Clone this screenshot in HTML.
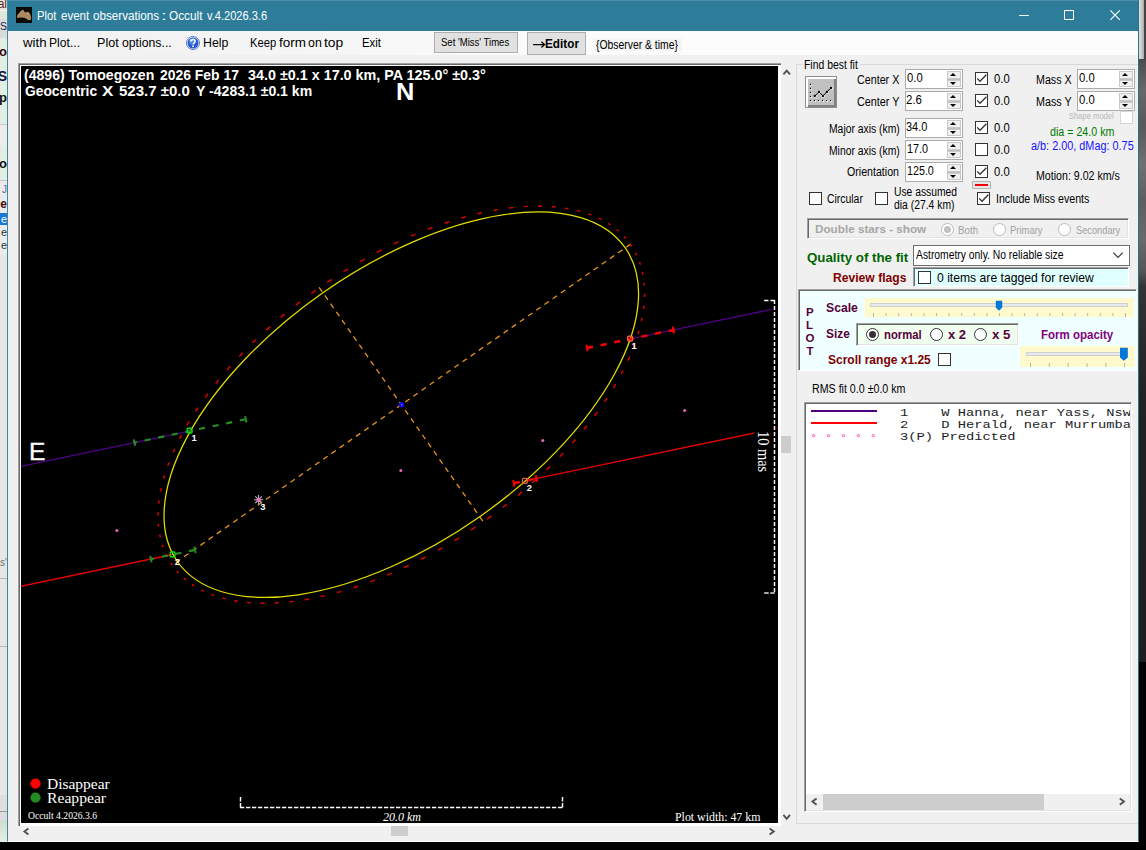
<!DOCTYPE html>
<html lang="en"><head><meta charset="utf-8"><title>Plot event observations : Occult v.4.2026.3.6</title>
<style>
html,body{margin:0;padding:0;font-family:"Liberation Sans",sans-serif}
body{width:1146px;height:850px;overflow:hidden;background:#000;position:relative;font-family:"Liberation Sans",sans-serif;font-size:11px;color:#000}
div,span,svg{position:absolute;box-sizing:border-box}
.t{white-space:pre;transform-origin:0 50%;display:block}
.win{left:7px;top:0;width:1132px;height:842px;background:#f0f0f0;border-left:1px solid #3d88a8;border-right:1px solid #2a6f8c;border-bottom:1px solid #fff}
.title{left:8px;top:0;width:1130px;height:31px;background:#2d7d9a;border-top:1px solid #4a8ea9}
.menu{left:8px;top:31px;width:1130px;height:24px;background:linear-gradient(90deg,#f1f1f1 0,#f5f5f5 300px,#fbfbfb 520px,#fcfcfc 700px)}
.btn{background:#e1e1e1;border:1px solid #adadad}
.sunk{border-style:solid;border-width:1px;border-color:#a0a0a0 #fff #fff #a0a0a0}
.nud{width:58px;height:20px;background:#fff;border:1px solid #ababab}
.nud i{position:absolute;box-sizing:border-box;left:41px;width:13.6px;height:8.2px;background:#f0f0f0;border:1px solid #c9c9c9}
.nud i.u{top:.9px;box-shadow:0 1.3px 0 #bfbfbf}.nud i.d{top:10px;height:7.2px}
.nud i:after{content:"";position:absolute;left:2.3px;border:3.5px solid transparent}
.nud i.u:after{border-bottom:3.5px solid #000;border-top:0;top:1.2px}
.nud i.d:after{top:1px;border-top:3.5px solid #000;border-bottom:0}
.cb{width:13px;height:13px;background:#fff;border:1px solid #333}
.rb{width:13px;height:13px;border-radius:50%;background:#fff;border:1px solid #333}
.rb.dis{border-color:#bcbcbc}
.thumb{background:#cdcdcd}
.sb{-webkit-text-stroke:.35px currentColor}
.serif{font-family:"Liberation Serif",serif}
.mono{font-family:"Liberation Mono",monospace}
</style></head><body>
<!-- neighbouring window strip (left) and desktop (right) -->
<div style="left:0;top:0;width:7px;height:842px;background:#e6e6e6;overflow:hidden"><div style="left:0;top:0px;width:7px;height:10px;background:#e8e4e2"></div><div style="left:0;top:10px;width:7px;height:1px;background:#f6faf2"></div><div style="left:0;top:11px;width:7px;height:8px;background:#dfe9db"></div><div style="left:0;top:19px;width:7px;height:19px;background:#dadada"></div><div style="left:0;top:38px;width:7px;height:86px;background:#e3eee3"></div><div style="left:0;top:124px;width:7px;height:1px;background:#c8c8c8"></div><div style="left:0;top:125px;width:7px;height:21px;background:#ececec"></div><div style="left:0;top:146px;width:7px;height:34px;background:#e3eee3"></div><div style="left:0;top:180px;width:7px;height:1px;background:#c4c4c4"></div><div style="left:0;top:181px;width:7px;height:32px;background:#eaeaea"></div><div style="left:0;top:213px;width:7px;height:12px;background:#1979d4"></div><div style="left:0;top:225px;width:7px;height:30px;background:#ececec"></div><div style="left:0;top:578px;width:7px;height:1px;background:#b8b8b8"></div><div style="left:0;top:646px;width:7px;height:1px;background:#b8b8b8"></div><div style="left:0;top:795px;width:7px;height:16px;background:#dedede"></div><div style="left:0;top:811px;width:7px;height:1px;background:#9a9a9a"></div><div style="left:0;top:812px;width:7px;height:8px;background:#dcdcdc"></div><div style="left:0;top:820px;width:7px;height:22px;background:linear-gradient(#cfdccd,#e6efe3)"></div><span style="right:0;top:-1.7px;font-size:12px;line-height:12px;font-weight:400;color:#5a2a1a;white-space:pre">al</span><span style="right:0;top:21.1px;font-size:10.5px;line-height:10.5px;font-weight:400;color:#1a1a4a;white-space:pre">S</span><span style="right:0;top:45.0px;font-size:13px;line-height:13px;font-weight:700;color:#3a0808;white-space:pre">to</span><span style="right:0;top:68.6px;font-size:14px;line-height:14px;font-weight:700;color:#10103a;white-space:pre">S</span><span style="right:0;top:91.0px;font-size:13px;line-height:13px;font-weight:700;color:#101010;white-space:pre">sp</span><span style="right:0;top:157.4px;font-size:13px;line-height:13px;font-weight:700;color:#101010;white-space:pre">o</span><span style="right:0;top:184.5px;font-size:10px;line-height:10px;font-weight:400;color:#5a6a9a;white-space:pre">J</span><span style="right:0;top:197.8px;font-size:12px;line-height:12px;font-weight:700;color:#4a0a0a;white-space:pre">le</span><span style="right:0;top:213.7px;font-size:11px;line-height:11px;font-weight:400;color:#ffffff;white-space:pre">e</span><span style="right:0;top:226.7px;font-size:11px;line-height:11px;font-weight:400;color:#303030;white-space:pre">e</span><span style="right:0;top:239.7px;font-size:11px;line-height:11px;font-weight:400;color:#303030;white-space:pre">e</span><span style="right:0;top:557.5px;font-size:10px;line-height:10px;font-weight:400;color:#707070;white-space:pre">s'</span></div>
<div style="left:1139px;top:0;width:7px;height:662px;background:linear-gradient(#444 0,#444 59px,#505050 62px,#686868 90px,#585858 125px,#707070 165px,#5e5e5e 200px,#6a6a6a 240px,#555 272px,#343434 286px,#2c2c2c 330px,#222 400px,#1e1e1e 660px)"></div>
<div style="left:1139.4px;top:0;width:4.8px;height:59px;background:linear-gradient(90deg,#e2e2e2,#c4c4c4 60%,#a8a8a8)"></div>
<div class="win"></div>
<div class="title"></div>
<svg style="left:16px;top:7px" width="16" height="16" viewBox="0 0 16 16"><rect width="16" height="16" fill="#0c0a07"/><path d="M.9 9.3C1.4 8 2 7.2 2.8 6.5C3.5 5.5 4.2 4.7 5 4C5.6 3.4 6.2 3 6.8 2.9C7.3 2.9 7.7 3 7.9 3.4C8.2 4 8.3 4.7 8.7 5.1C9.1 5.4 9.5 5.5 9.9 5.4C10.5 5 11 4.8 11.6 4.8C12.3 4.9 12.9 5.3 13.4 5.9C13.9 6.5 14.2 7.3 14.4 8.1C14.8 9 15 10 15.1 10.9C15.1 11.8 14.8 12.5 14.3 12.9C13.7 13.2 13 13.2 12.4 13C11.8 12.8 11.2 12.5 10.7 12.1C10.1 11.6 9.6 11.1 9 10.9C8.4 10.7 7.7 10.7 7.1 10.7C6.2 10.6 5.2 10.6 4.3 10.6C3.6 10.7 2.9 10.9 2.2 10.9C1.7 10.8 1.3 10.6 1.1 10.2C.9 9.9 .8 9.6 .9 9.3Z" fill="#a98a5e"/><path d="M2.6 8.2C3.6 6.6 4.8 5.2 6.4 4.2M10.4 6.6C11.4 6.2 12.4 6.6 13.2 7.6" fill="none" stroke="#b99a6c" stroke-width="1.2" stroke-linecap="round" opacity=".7"/></svg>
<svg style="left:1010px;top:0" width="128" height="31" viewBox="1010 0 128 31" fill="none" stroke="#fff" stroke-width="1"><path d="M1019 15.5H1029"/><rect x="1064.5" y="10.5" width="9" height="9"/><path d="M1110.3 10.3L1119.8 19.8M1119.8 10.3L1110.3 19.8" stroke-width="1.15"/></svg>
<div class="menu"></div>
<svg style="left:186px;top:36px" width="14" height="14" viewBox="0 0 14 14"><circle cx="7" cy="7" r="6.5" fill="#fff" stroke="#4468c8" stroke-width=".9"/><circle cx="7" cy="7" r="5.5" fill="#2256cc"/><circle cx="6.2" cy="5.6" r="3.6" fill="#5f98ee" opacity=".55"/><circle cx="5.8" cy="4.8" r="2" fill="#7fb0f6" opacity=".5"/><path d="M4.9 5.6C4.9 4.2 5.8 3.5 7.1 3.5C8.4 3.5 9.2 4.3 9.2 5.3C9.2 6.8 7.3 6.9 7.2 8.4" fill="none" stroke="#fff" stroke-width="1.5"/><circle cx="7.1" cy="10.3" r=".95" fill="#fff"/></svg>
<div class="btn" style="left:434px;top:32px;width:84px;height:21px"></div>
<div class="btn" style="left:527px;top:32px;width:59px;height:23px"></div>
<svg style="left:531px;top:40px" width="16" height="10" viewBox="531 40 16 10"><path d="M533.1 44.6H544.4M541.4 41.8L544.6 44.6L541.4 47.4" fill="none" stroke="#000" stroke-width="1.3"/></svg>
<div style="left:593px;top:38px;width:89px;height:13px;background:#f5f5f5"></div>
<!-- plot picture box with scrollbars -->
<div style="left:18px;top:63px;width:763px;height:763px;background:#fff;border-top:1px solid #a0a0a0;border-left:1px solid #a0a0a0"></div>
<div style="left:19px;top:64px;width:762px;height:762px;background:#fff;border-top:1px solid #696969;border-left:1px solid #696969"></div>
<div style="left:21px;top:66px;width:757px;height:757px;background:#000"></div>
<svg style="left:21px;top:66px" width="757" height="757" viewBox="21 66 757 757" fill="none"><g stroke="#ea9614" stroke-width="1.28" stroke-dasharray="5.3 4.7"><path d="M630.7 244.1L171.9 565.3"/><path d="M319.1 287.3L483.5 522.1"/></g><path d="M20.5 466.4L189.6 431.1M630 339.0L771.6 309.4M777 308.3L778 308.1" stroke="#4e0388" stroke-width="1.25"/><path d="M20.5 586.3L172.6 554.5M524.9 480.9L778 428.0" stroke="#e40000" stroke-width="1.4"/><ellipse cx="401.3" cy="404.7" rx="273.4" ry="136.7" transform="rotate(-35 401.3 404.7)" stroke="#e2de00" stroke-width="1.25"/><path d="M630.3 244.2L631.8 246.5M635.4 252.8L636.7 255.3M639.5 262.1L640.4 264.7M642.3 272.0L642.9 274.9M644.0 282.7L644.3 285.7M644.6 293.9L644.5 297.1M643.9 305.7L643.5 309.0M642.0 317.9L641.3 321.3M639.0 330.6L638.0 334.1M634.8 343.6L633.5 347.2M629.5 356.9L627.9 360.6M623.1 370.5L621.1 374.2M615.6 384.2L613.3 388.0M607.0 398.0L604.5 401.8M597.5 411.9L594.7 415.7M586.9 425.7L583.9 429.5M575.5 439.4L572.2 443.2M563.3 453.0L559.7 456.7M550.2 466.3L546.5 469.9M536.4 479.3L532.5 482.8M522.0 492.0L517.9 495.4M506.9 504.2L502.7 507.5M491.4 515.9L487.1 519.1M475.4 527.1L471.0 530.1M459.1 537.8L454.5 540.6M442.5 547.7L437.8 550.3M425.6 557.0L421.0 559.4M408.7 565.5L404.0 567.7M391.7 573.2L387.0 575.2M374.8 580.1L370.1 581.9M358.0 586.2L353.4 587.7M341.4 591.4L336.9 592.6M325.1 595.6L320.7 596.6M309.2 599.0L304.8 599.7M293.7 601.4L289.5 601.8M278.7 602.8L274.7 603.0M264.4 603.2L260.5 603.2M250.7 602.7L247.0 602.4M237.7 601.3L234.3 600.7M225.6 598.9L222.4 598.0M214.2 595.5L211.3 594.4M203.9 591.2L201.2 589.8M194.4 586.0L192.0 584.4M186.0 579.9L183.9 578.1M178.6 572.9L176.8 570.9M172.3 565.2L170.8 562.9M167.2 556.6L165.9 554.1M163.1 547.3L162.2 544.7M160.3 537.4L159.7 534.5M158.6 526.7L158.3 523.7M158.0 515.5L158.1 512.3M158.7 503.7L159.1 500.4M160.6 491.5L161.3 488.1M163.6 478.8L164.6 475.3M167.8 465.8L169.1 462.2M173.1 452.5L174.7 448.8M179.5 438.9L181.5 435.2M187.0 425.2L189.3 421.4M195.6 411.4L198.1 407.6M205.1 397.5L207.9 393.7M215.7 383.7L218.7 379.9M227.1 370.0L230.4 366.2M239.3 356.4L242.9 352.7M252.4 343.1L256.1 339.5M266.2 330.1L270.1 326.6M280.6 317.4L284.7 314.0M295.7 305.2L299.9 301.9M311.2 293.5L315.5 290.3M327.2 282.3L331.6 279.3M343.5 271.6L348.1 268.8M360.1 261.7L364.8 259.1M377.0 252.4L381.6 250.0M393.9 243.9L398.6 241.7M410.9 236.2L415.6 234.2M427.8 229.3L432.5 227.5M444.6 223.2L449.2 221.7M461.2 218.0L465.7 216.8M477.5 213.8L481.9 212.8M493.4 210.4L497.8 209.7M508.9 208.0L513.1 207.6M523.9 206.6L527.9 206.4M538.2 206.2L542.1 206.2M551.9 206.7L555.6 207.0M564.9 208.1L568.3 208.7M577.0 210.5L580.2 211.4M588.4 213.9L591.3 215.0M598.7 218.2L601.4 219.6M608.2 223.4L610.6 225.0M616.6 229.5L618.7 231.3M624.0 236.5L625.8 238.5" stroke="#de0000" stroke-width="1.45"/><path d="M245.8 419.3L134.4 442.6" stroke="#239023" stroke-width="2.1" stroke-dasharray="6.1 7.8"/><path d="M133.7 439.4L135.1 445.8M245.1 416.1L246.5 422.5" stroke="#239023" stroke-width="2"/><path d="M587.0 348.0L674.6 329.7" stroke="#ff0000" stroke-width="2.5" stroke-dasharray="6.1 7.8"/><path d="M586.3 344.8L587.7 351.2M672.7 326.7L674.1 333.2" stroke="#ff0000" stroke-width="2"/><path d="M195.0 549.9L150.9 559.1" stroke="#239023" stroke-width="2.1" stroke-dasharray="6.1 7.8"/><path d="M150.2 555.9L151.6 562.3M194.3 546.6L195.7 553.1" stroke="#239023" stroke-width="2"/><path d="M513.8 483.2L537.7 478.2" stroke="#ff0000" stroke-width="2.5" stroke-dasharray="6.1 7.8"/><path d="M513.1 480.0L514.5 486.5M535.8 475.3L537.2 481.7" stroke="#ff0000" stroke-width="2"/><rect x="187.2" y="428.2" width="4.8" height="4.8" rx=".9" stroke="#10dc10" stroke-width="1.4"/><rect x="170.2" y="552.0" width="4.8" height="4.8" rx=".9" stroke="#10dc10" stroke-width="1.4"/><rect x="627.7" y="336.2" width="4.8" height="4.8" rx=".9" stroke="#ee6038" stroke-width="1.4"/><rect x="522.5" y="478.4" width="4.8" height="4.8" rx=".9" stroke="#d86040" stroke-width="1.4"/><circle cx="401.6" cy="404.8" r="2.75" fill="#0a0aff"/><circle cx="401.6" cy="404.8" r=".7" fill="#c08030"/><circle cx="116.9" cy="530.4" r="1.5" fill="#e668b4"/><circle cx="258.9" cy="500.4" r="1.5" fill="#e668b4"/><circle cx="400.8" cy="470.5" r="1.5" fill="#e668b4"/><circle cx="542.8" cy="440.5" r="1.5" fill="#e668b4"/><circle cx="684.7" cy="410.6" r="1.5" fill="#e668b4"/><path d="M254.0 499.7L263.2 499.7M255.3 496.4L261.9 503.0M258.6 495.1L258.6 504.3M261.9 496.4L255.3 503.0" stroke="#b4b4cc" stroke-width="1.1"/><circle cx="258.6" cy="499.7" r="1.9" fill="#ff6ab6"/><rect x="754.4" y="424" width="22.8" height="52" fill="#000"/><g stroke="#fff" stroke-width="1.45"><path d="M774.5 300V592.1" stroke-dasharray="4.1 1.9"/><path d="M764.2 300.5H774.9" stroke-dasharray="4.2 2"/><path d="M764.2 593H774.9" stroke="#a8a8a8" stroke-width="1.8" stroke-dasharray="4.5 1.6"/><path d="M240 807.45H562.9" stroke-dasharray="4.3 1.7"/><path d="M240.5 797V807.5M562.5 797V807.5" stroke-dasharray="4.4 1.7"/></g><circle cx="35.5" cy="783.6" r="5.1" fill="#f00"/><circle cx="35.5" cy="797.6" r="5.1" fill="#228b22"/></svg>
<span class="t serif" style="left:758.4px;top:431px;font-size:16px;line-height:16px;color:#fff;transform-origin:0 0;transform:rotate(90deg) translate(0,-13.4px) scaleX(.9)">10 mas</span>
<div class="thumb" style="left:781px;top:436px;width:10px;height:17px"></div>
<div class="thumb" style="left:391px;top:826px;width:17px;height:10px"></div>
<svg style="left:0;top:0" width="800" height="842" viewBox="0 0 800 842" fill="none" stroke="#505050" stroke-width="1.85"><path d="M783.4 74.4L786.7 70.6L790 74.4"/><path d="M783.4 814.8L786.7 818.8L790 814.8"/><path d="M28.4 828.4L24.4 831.5L28.4 834.6"/><path d="M769.6 828.4L773.8 831.5L769.6 834.6"/></svg>
<!-- Find best fit group -->
<div style="left:796px;top:64px;width:342px;height:760px;border:1px solid #d9d9d9;border-right:0"></div>
<div style="left:803px;top:60px;width:57px;height:10px;background:#f0f0f0"></div>
<div style="left:805px;top:76px;width:32px;height:32px;background:#c0c0c0;border:1px solid #8e8e8e;box-shadow:inset 2px 2px 0 #fff,inset -2px -2px 0 #828282"></div>
<svg style="left:805px;top:76px" width="32" height="32" viewBox="0 0 32 32"><rect x="5.4" y="8.3" width="1.5" height="1.5" fill="#fff"/><rect x="5.4" y="12.3" width="1.5" height="1.5" fill="#fff"/><rect x="5.4" y="16.4" width="1.5" height="1.5" fill="#fff"/><rect x="5.4" y="20.4" width="1.5" height="1.5" fill="#fff"/><rect x="5.4" y="24.4" width="1.5" height="1.5" fill="#fff"/><rect x="9.4" y="24.4" width="1.5" height="1.5" fill="#fff"/><rect x="13.4" y="24.4" width="1.5" height="1.5" fill="#fff"/><rect x="17.5" y="24.4" width="1.5" height="1.5" fill="#fff"/><rect x="21.5" y="24.4" width="1.5" height="1.5" fill="#fff"/><rect x="25.5" y="24.4" width="1.5" height="1.5" fill="#fff"/><rect x="4.9" y="7.8" width="1.2" height="1.2" fill="#000"/><rect x="4.9" y="11.8" width="1.2" height="1.2" fill="#000"/><rect x="4.9" y="15.9" width="1.2" height="1.2" fill="#000"/><rect x="4.9" y="19.9" width="1.2" height="1.2" fill="#000"/><rect x="4.9" y="23.9" width="1.2" height="1.2" fill="#000"/><rect x="8.9" y="23.9" width="1.2" height="1.2" fill="#000"/><rect x="12.9" y="23.9" width="1.2" height="1.2" fill="#000"/><rect x="17.0" y="23.9" width="1.2" height="1.2" fill="#000"/><rect x="21.0" y="23.9" width="1.2" height="1.2" fill="#000"/><rect x="25.0" y="23.9" width="1.2" height="1.2" fill="#000"/><rect x="9.3" y="19.4" width="2.1" height="2.1" fill="#fff"/><rect x="13.5" y="15.4" width="2.1" height="2.1" fill="#fff"/><rect x="17.5" y="19.4" width="2.1" height="2.1" fill="#fff"/><rect x="21.4" y="15.4" width="2.1" height="2.1" fill="#fff"/><rect x="25.5" y="11.4" width="2.1" height="2.1" fill="#fff"/><path d="M9.8 19.9L14 15.9L18 19.9L21.9 15.9L26 11.9" fill="none" stroke="#000" stroke-width="1"/><rect x="8.8" y="18.9" width="2" height="2" fill="#000"/><rect x="13.0" y="14.9" width="2" height="2" fill="#000"/><rect x="17.0" y="18.9" width="2" height="2" fill="#000"/><rect x="20.9" y="14.9" width="2" height="2" fill="#000"/><rect x="25.0" y="10.9" width="2" height="2" fill="#000"/></svg>
<div class="nud" style="left:905px;top:69px"><i class="u"></i><i class="d"></i></div>
<div class="cb" style="left:975px;top:72px"></div>
<svg style="left:975px;top:72px" width="13" height="13" viewBox="0 0 13 13"><path d="M2.2 6.4L5 9.3L11.4 2.8" fill="none" stroke="#333" stroke-width="1.3"/></svg>
<div class="nud" style="left:905px;top:91px"><i class="u"></i><i class="d"></i></div>
<div class="cb" style="left:975px;top:94px"></div>
<svg style="left:975px;top:94px" width="13" height="13" viewBox="0 0 13 13"><path d="M2.2 6.4L5 9.3L11.4 2.8" fill="none" stroke="#333" stroke-width="1.3"/></svg>
<div class="nud" style="left:905px;top:118px"><i class="u"></i><i class="d"></i></div>
<div class="cb" style="left:975px;top:121px"></div>
<svg style="left:975px;top:121px" width="13" height="13" viewBox="0 0 13 13"><path d="M2.2 6.4L5 9.3L11.4 2.8" fill="none" stroke="#333" stroke-width="1.3"/></svg>
<div class="nud" style="left:905px;top:140px"><i class="u"></i><i class="d"></i></div>
<div class="cb" style="left:975px;top:143px"></div>
<div class="nud" style="left:905px;top:162px"><i class="u"></i><i class="d"></i></div>
<div class="cb" style="left:975px;top:165px"></div>
<svg style="left:975px;top:165px" width="13" height="13" viewBox="0 0 13 13"><path d="M2.2 6.4L5 9.3L11.4 2.8" fill="none" stroke="#333" stroke-width="1.3"/></svg>
<div class="nud" style="left:1077px;top:69px"><i class="u"></i><i class="d"></i></div>
<div class="nud" style="left:1077px;top:91px"><i class="u"></i><i class="d"></i></div>
<div style="left:1120px;top:111px;width:13px;height:12.7px;background:#fff;border:1px solid #d6d6d6"></div>
<div style="left:972px;top:181px;width:19px;height:8px;background:#e6e6e6;border:1px solid #b4b4b4"></div><div style="left:975px;top:184px;width:13px;height:2px;background:#f00000"></div>
<div class="cb" style="left:809px;top:192px"></div>
<div class="cb" style="left:875px;top:192px"></div>
<div class="cb" style="left:977px;top:192px"></div>
<svg style="left:977px;top:192px" width="13" height="13" viewBox="0 0 13 13"><path d="M2.2 6.4L5 9.3L11.4 2.8" fill="none" stroke="#333" stroke-width="1.3"/></svg>
<div class="sunk" style="left:807px;top:218px;width:322px;height:21px;border-color:#a0a0a0 #fff #fff #a0a0a0;box-shadow:inset 1px 1px 0 #696969,inset -1px -1px 0 #e3e3e3"></div>
<div class="rb dis" style="left:941px;top:223px"></div>
<div style="left:944px;top:226px;width:7px;height:7px;border-radius:50%;background:#c2c2c2"></div>
<div class="rb dis" style="left:993px;top:223px"></div>
<div class="rb dis" style="left:1058px;top:223px"></div>
<div style="left:913px;top:245px;width:217px;height:21px;background:#fff;border:1px solid #707070"></div>
<svg style="left:1111px;top:250px" width="14" height="10" viewBox="0 0 14 10"><path d="M2.2 2.6L7 7.4L11.8 2.6" fill="none" stroke="#3c3c3c" stroke-width="1.2"/></svg>
<div class="sunk" style="left:913px;top:267px;width:216px;height:20px;background:#e0ffff;border-color:#a0a0a0 #fff #fff #a0a0a0;box-shadow:inset 1px 1px 0 #696969"></div>
<div class="cb" style="left:918px;top:271px"></div>
<div class="sunk" style="left:798px;top:289px;width:339px;height:82px;background:#f0ffff;border-color:#a0a0a0 #fff #fff #a0a0a0;box-shadow:inset 1px 1px 0 #696969"></div>
<div class="cb" style="left:938px;top:353px"></div>
<div style="left:865px;top:298px;width:269px;height:19px;background:#fffacd"></div>
<div style="left:870px;top:303px;width:258px;height:4px;background:#e7eaea;border:1px solid #d0d0d0"></div>
<svg style="left:865px;top:298px" width="269" height="19" viewBox="865 298 269 19"><rect x="873.0" y="313" width="1" height="4" fill="#b8b4a0"/><rect x="885.6" y="313" width="1" height="3" fill="#b8b4a0"/><rect x="898.2" y="313" width="1" height="3" fill="#b8b4a0"/><rect x="910.8" y="313" width="1" height="3" fill="#b8b4a0"/><rect x="923.4" y="313" width="1" height="3" fill="#b8b4a0"/><rect x="936.0" y="313" width="1" height="3" fill="#b8b4a0"/><rect x="948.6" y="313" width="1" height="3" fill="#b8b4a0"/><rect x="961.2" y="313" width="1" height="3" fill="#b8b4a0"/><rect x="973.8" y="313" width="1" height="3" fill="#b8b4a0"/><rect x="986.4" y="313" width="1" height="3" fill="#b8b4a0"/><rect x="999.0" y="313" width="1" height="3" fill="#b8b4a0"/><rect x="1011.6" y="313" width="1" height="3" fill="#b8b4a0"/><rect x="1024.2" y="313" width="1" height="3" fill="#b8b4a0"/><rect x="1036.8" y="313" width="1" height="3" fill="#b8b4a0"/><rect x="1049.4" y="313" width="1" height="3" fill="#b8b4a0"/><rect x="1062.0" y="313" width="1" height="3" fill="#b8b4a0"/><rect x="1074.6" y="313" width="1" height="3" fill="#b8b4a0"/><rect x="1087.2" y="313" width="1" height="3" fill="#b8b4a0"/><rect x="1099.8" y="313" width="1" height="3" fill="#b8b4a0"/><rect x="1112.4" y="313" width="1" height="3" fill="#b8b4a0"/><rect x="1125.0" y="313" width="1" height="4" fill="#b8b4a0"/><path d="M995.8 300.7H1002.2V307.6L999 310.8L995.8 307.6Z" fill="#0078d7"/></svg>
<div class="sunk" style="left:856px;top:323px;width:163px;height:23px;background:#f0fff0;border-color:#a0a0a0 #fff #fff #a0a0a0;box-shadow:inset 1px 1px 0 #696969,inset -1px -1px 0 #e3e3e3"></div>
<div class="rb" style="left:866px;top:328px"></div>
<div style="left:869px;top:331px;width:7px;height:7px;border-radius:50%;background:#333"></div>
<div class="rb" style="left:930px;top:328px"></div>
<div class="rb" style="left:974px;top:328px"></div>
<div style="left:1020px;top:346px;width:115px;height:21px;background:#fffacd"></div>
<div style="left:1026px;top:352px;width:102px;height:4px;background:#e7eaea;border:1px solid #d0d0d0"></div>
<svg style="left:1020px;top:346px" width="115" height="21" viewBox="1020 346 115 21"><rect x="1030.0" y="363" width="1" height="4" fill="#b8b4a0"/><rect x="1048.8" y="363" width="1" height="4" fill="#b8b4a0"/><rect x="1067.7" y="363" width="1" height="4" fill="#b8b4a0"/><rect x="1086.5" y="363" width="1" height="4" fill="#b8b4a0"/><rect x="1105.4" y="363" width="1" height="4" fill="#b8b4a0"/><rect x="1124.2" y="363" width="1" height="4" fill="#b8b4a0"/><path d="M1120 347.8H1127.8V357.4L1123.9 360.8L1120 357.4Z" fill="#0078d7"/></svg>
<div style="left:804px;top:402px;width:328px;height:410px;background:#fff;border-style:solid;border-width:1px;border-color:#a0a0a0 #fff #fff #a0a0a0;box-shadow:inset 1px 1px 0 #696969,inset -1px -1px 0 #e3e3e3"></div>
<div style="left:811px;top:410px;width:66px;height:2px;background:#4b0082"></div>
<div style="left:811px;top:422px;width:66px;height:2px;background:#ff0000"></div>
<svg style="left:810px;top:432px" width="70" height="8" viewBox="810 432 70 8"><circle cx="813.6" cy="435.6" r="1.15" fill="#fff" stroke="#ff50b0" stroke-width="1"/><circle cx="828.5" cy="435.6" r="1.15" fill="#fff" stroke="#ff50b0" stroke-width="1"/><circle cx="843.5" cy="435.6" r="1.15" fill="#fff" stroke="#ff50b0" stroke-width="1"/><circle cx="858.4" cy="435.6" r="1.15" fill="#fff" stroke="#ff50b0" stroke-width="1"/><circle cx="873.3" cy="435.6" r="1.15" fill="#fff" stroke="#ff50b0" stroke-width="1"/></svg>
<div style="left:806px;top:794px;width:324px;height:16px;background:#f0f0f0"></div>
<div class="thumb" style="left:823px;top:794px;width:221px;height:16px"></div>
<svg style="left:806px;top:794px" width="324" height="16" viewBox="806 794 324 16" fill="none" stroke="#505050" stroke-width="1.85"><path d="M816.6 798.4L812.4 801.6L816.6 804.8"/><path d="M1119.8 798.4L1124 801.6L1119.8 804.8"/></svg>
<!-- text labels -->
<span class="t" style="left:36.70px;top:10.05px;font-size:12.5px;line-height:12.5px;color:#fff;transform:scaleX(0.9000);">Plot</span>
<span class="t" style="left:60.58px;top:10.05px;font-size:12.5px;line-height:12.5px;color:#fff;transform:scaleX(0.9233);">event</span>
<span class="t" style="left:93.08px;top:10.05px;font-size:12.5px;line-height:12.5px;color:#fff;transform:scaleX(0.9330);">observations</span>
<span class="t" style="left:160.75px;top:10.05px;font-size:12.5px;line-height:12.5px;color:#fff;transform:scaleX(1.6500);">:</span>
<span class="t" style="left:168.97px;top:10.05px;font-size:12.5px;line-height:12.5px;color:#fff;transform:scaleX(0.9433);">Occult</span>
<span class="t" style="left:207.10px;top:10.05px;font-size:12.5px;line-height:12.5px;color:#fff;transform:scaleX(0.8851);">v.4.2026.3.6</span>
<span class="t" style="left:22.90px;top:37.05px;font-size:12.5px;line-height:12.5px;color:#000;transform:scaleX(1.0594);">with</span>
<span class="t" style="left:48.63px;top:37.05px;font-size:12.5px;line-height:12.5px;color:#000;transform:scaleX(0.9700);">Plot...</span>
<span class="t" style="left:97.39px;top:37.05px;font-size:12.5px;line-height:12.5px;color:#000;transform:scaleX(1.0065);">Plot</span>
<span class="t" style="left:121.65px;top:37.05px;font-size:12.5px;line-height:12.5px;color:#000;transform:scaleX(0.9796);">options...</span>
<span class="t" style="left:203.41px;top:37.05px;font-size:12.5px;line-height:12.5px;color:#000;transform:scaleX(0.9863);">Help</span>
<span class="t" style="left:249.70px;top:37.05px;font-size:12.5px;line-height:12.5px;color:#000;transform:scaleX(0.8964);">Keep</span>
<span class="t" style="left:278.54px;top:37.05px;font-size:12.5px;line-height:12.5px;color:#000;transform:scaleX(1.0750);">form</span>
<span class="t" style="left:307.94px;top:37.05px;font-size:12.5px;line-height:12.5px;color:#000;transform:scaleX(0.9892);">on</span>
<span class="t" style="left:323.93px;top:37.05px;font-size:12.5px;line-height:12.5px;color:#000;transform:scaleX(1.1100);">top</span>
<span class="t" style="left:361.79px;top:37.05px;font-size:12.5px;line-height:12.5px;color:#000;transform:scaleX(0.9102);">Exit</span>
<span class="t" style="left:440.98px;top:37.80px;font-size:10px;line-height:10px;color:#000;transform:scaleX(0.9521);">Set 'Miss' Times</span>
<span class="t" style="left:544.97px;top:38.00px;font-size:12.6px;line-height:12.6px;color:#000;font-weight:700;transform:scaleX(0.9340);">Editor</span>
<span class="t" style="left:596.02px;top:39.05px;font-size:12.5px;line-height:12.5px;color:#000;transform:scaleX(0.8308);">{Observer &amp; time}</span>
<span class="t" style="left:23.93px;top:68.30px;font-size:14px;line-height:14px;color:#fff;font-weight:700;transform:scaleX(1.0047);">(4896) Tomoegozen</span>
<span class="t" style="left:159.77px;top:68.30px;font-size:14px;line-height:14px;color:#fff;font-weight:700;transform:scaleX(0.9945);">2026 Feb 17</span>
<span class="t" style="left:248.36px;top:68.30px;font-size:14px;line-height:14px;color:#fff;font-weight:700;transform:scaleX(1.0247);">34.0 ±0.1 x 17.0 km, PA 125.0° ±0.3°</span>
<span class="t" style="left:24.54px;top:84.30px;font-size:14px;line-height:14px;color:#fff;font-weight:700;transform:scaleX(0.9861);">Geocentric</span>
<span class="t" style="left:102.30px;top:84.30px;font-size:14px;line-height:14px;color:#fff;font-weight:700;transform:scaleX(1.2115);">X</span>
<span class="t" style="left:118.84px;top:84.30px;font-size:14px;line-height:14px;color:#fff;font-weight:700;transform:scaleX(1.0714);">523.7 ±0.0</span>
<span class="t" style="left:195.67px;top:84.30px;font-size:14px;line-height:14px;color:#fff;font-weight:700;transform:scaleX(1.0050);">Y -4283.1 ±0.1 km</span>
<span class="t" style="left:395.68px;top:80.65px;font-size:23.3px;line-height:23.3px;color:#fff;font-weight:700;transform:scaleX(1.0902);">N</span>
<span class="t sb" style="left:29.13px;top:440.70px;font-size:23.2px;line-height:23.2px;color:#fff;transform:scaleX(1.0615);">E</span>
<span class="t" style="left:191.53px;top:433.65px;font-size:9.3px;line-height:9.3px;color:#fff;font-weight:700;">1</span>
<span class="t" style="left:631.53px;top:341.65px;font-size:9.3px;line-height:9.3px;color:#fff;font-weight:700;">1</span>
<span class="t" style="left:174.77px;top:557.65px;font-size:9.3px;line-height:9.3px;color:#fff;font-weight:700;">2</span>
<span class="t" style="left:526.67px;top:483.65px;font-size:9.3px;line-height:9.3px;color:#fff;font-weight:700;">2</span>
<span class="t" style="left:260.17px;top:502.65px;font-size:9.3px;line-height:9.3px;color:#fff;font-weight:700;">3</span>
<span class="t serif" style="left:46.93px;top:777.80px;font-size:14px;line-height:14px;color:#fff;transform:scaleX(1.1041);">Disappear</span>
<span class="t serif" style="left:46.93px;top:791.80px;font-size:14px;line-height:14px;color:#fff;transform:scaleX(1.1178);">Reappear</span>
<span class="t serif" style="left:27.98px;top:810.80px;font-size:10px;line-height:10px;color:#fff;transform:scaleX(0.9634);">Occult 4.2026.3.6</span>
<span class="t serif" style="left:383.10px;top:810.10px;font-size:13.4px;line-height:13.4px;color:#fff;font-style:italic;transform:scaleX(0.8976);">20.0 km</span>
<span class="t serif" style="left:675.40px;top:810.10px;font-size:13.4px;line-height:13.4px;color:#fff;transform:scaleX(0.8865);">Plot width: 47 km</span>
<span class="t" style="left:804.23px;top:59.30px;font-size:12px;line-height:12px;color:#000;transform:scaleX(0.8672);">Find best fit</span>
<span class="t" style="left:856.80px;top:74.30px;font-size:12px;line-height:12px;color:#000;transform:scaleX(0.8935);">Center X</span>
<span class="t" style="left:906.69px;top:72.30px;font-size:12px;line-height:12px;color:#000;transform:scaleX(0.9375);">0.0</span>
<span class="t" style="left:993.89px;top:73.30px;font-size:12px;line-height:12px;color:#000;transform:scaleX(0.9375);">0.0</span>
<span class="t" style="left:856.80px;top:96.30px;font-size:12px;line-height:12px;color:#000;transform:scaleX(0.9000);">Center Y</span>
<span class="t" style="left:906.36px;top:94.30px;font-size:12px;line-height:12px;color:#000;transform:scaleX(0.9574);">2.6</span>
<span class="t" style="left:993.89px;top:95.30px;font-size:12px;line-height:12px;color:#000;transform:scaleX(0.9375);">0.0</span>
<span class="t" style="left:828.54px;top:123.30px;font-size:12px;line-height:12px;color:#000;transform:scaleX(0.8627);">Major axis (km)</span>
<span class="t" style="left:906.39px;top:121.30px;font-size:12px;line-height:12px;color:#000;transform:scaleX(0.9134);">34.0</span>
<span class="t" style="left:993.89px;top:122.30px;font-size:12px;line-height:12px;color:#000;transform:scaleX(0.9375);">0.0</span>
<span class="t" style="left:828.54px;top:145.30px;font-size:12px;line-height:12px;color:#000;transform:scaleX(0.8627);">Minor axis (km)</span>
<span class="t" style="left:906.90px;top:143.30px;font-size:12px;line-height:12px;color:#000;transform:scaleX(0.9000);">17.0</span>
<span class="t" style="left:993.89px;top:144.30px;font-size:12px;line-height:12px;color:#000;transform:scaleX(0.9375);">0.0</span>
<span class="t" style="left:847.31px;top:166.30px;font-size:12px;line-height:12px;color:#000;transform:scaleX(0.8860);">Orientation</span>
<span class="t" style="left:906.91px;top:165.30px;font-size:12px;line-height:12px;color:#000;transform:scaleX(0.8930);">125.0</span>
<span class="t" style="left:993.89px;top:166.30px;font-size:12px;line-height:12px;color:#000;transform:scaleX(0.9375);">0.0</span>
<span class="t" style="left:1035.91px;top:74.30px;font-size:12px;line-height:12px;color:#000;transform:scaleX(0.8897);">Mass X</span>
<span class="t" style="left:1035.90px;top:96.30px;font-size:12px;line-height:12px;color:#000;transform:scaleX(0.8974);">Mass Y</span>
<span class="t" style="left:1078.69px;top:72.30px;font-size:12px;line-height:12px;color:#000;transform:scaleX(0.9375);">0.0</span>
<span class="t" style="left:1078.69px;top:94.30px;font-size:12px;line-height:12px;color:#000;transform:scaleX(0.9375);">0.0</span>
<span class="t" style="left:1068.69px;top:113.30px;font-size:8.2px;line-height:8.2px;color:#b6b6ba;transform:scaleX(0.9275);">Shape model</span>
<span class="t" style="left:1050.31px;top:126.30px;font-size:12px;line-height:12px;color:#007a00;transform:scaleX(0.8901);">dia = 24.0 km</span>
<span class="t" style="left:1031.40px;top:140.30px;font-size:12px;line-height:12px;color:#1414ff;transform:scaleX(0.9053);">a/b: 2.00, dMag: 0.75</span>
<span class="t" style="left:1035.52px;top:170.30px;font-size:12px;line-height:12px;color:#000;transform:scaleX(0.8850);">Motion: 9.02 km/s</span>
<span class="t" style="left:827.02px;top:193.30px;font-size:12px;line-height:12px;color:#000;transform:scaleX(0.8680);">Circular</span>
<span class="t" style="left:893.74px;top:186.30px;font-size:12px;line-height:12px;color:#000;transform:scaleX(0.8595);">Use assumed</span>
<span class="t" style="left:893.72px;top:199.30px;font-size:12px;line-height:12px;color:#000;transform:scaleX(0.8636);">dia (27.4 km)</span>
<span class="t" style="left:996.31px;top:193.30px;font-size:12px;line-height:12px;color:#000;transform:scaleX(0.8856);">Include Miss events</span>
<span class="t" style="left:815.02px;top:223.55px;font-size:11.5px;line-height:11.5px;color:#a6a6a6;font-weight:700;transform:scaleX(1.0178);">Double stars - show</span>
<span class="t" style="left:958.34px;top:225.80px;font-size:10px;line-height:10px;color:#a0a0a0;transform:scaleX(0.9828);">Both</span>
<span class="t" style="left:1010.37px;top:225.80px;font-size:10px;line-height:10px;color:#a0a0a0;transform:scaleX(0.9446);">Primary</span>
<span class="t" style="left:1075.69px;top:225.80px;font-size:10px;line-height:10px;color:#a0a0a0;transform:scaleX(0.9254);">Secondary</span>
<span class="t" style="left:806.68px;top:252.15px;font-size:12.3px;line-height:12.3px;color:#006400;font-weight:700;transform:scaleX(1.0813);">Quality of the fit</span>
<span class="t" style="left:916.00px;top:249.30px;font-size:12px;line-height:12px;color:#000;transform:scaleX(0.8613);">Astrometry only. No reliable size</span>
<span class="t" style="left:833.04px;top:272.15px;font-size:12.3px;line-height:12.3px;color:#800000;font-weight:700;transform:scaleX(0.9859);">Review flags</span>
<span class="t" style="left:937.17px;top:272.10px;font-size:12.4px;line-height:12.4px;color:#000;transform:scaleX(0.9816);">0 items are tagged for review</span>
<span class="t" style="left:805.93px;top:306.55px;font-size:11.5px;line-height:11.5px;color:#58003c;font-weight:700;">P</span>
<span class="t" style="left:805.93px;top:319.55px;font-size:11.5px;line-height:11.5px;color:#58003c;font-weight:700;">L</span>
<span class="t" style="left:805.47px;top:332.55px;font-size:11.5px;line-height:11.5px;color:#58003c;font-weight:700;">O</span>
<span class="t" style="left:806.60px;top:345.55px;font-size:11.5px;line-height:11.5px;color:#58003c;font-weight:700;">T</span>
<span class="t" style="left:826.27px;top:302.15px;font-size:12.3px;line-height:12.3px;color:#58003c;font-weight:700;transform:scaleX(0.9926);">Scale</span>
<span class="t" style="left:826.28px;top:328.15px;font-size:12.3px;line-height:12.3px;color:#58003c;font-weight:700;transform:scaleX(0.9667);">Size</span>
<span class="t" style="left:827.57px;top:354.15px;font-size:12.3px;line-height:12.3px;color:#800000;font-weight:700;transform:scaleX(0.9764);">Scroll range x1.25</span>
<span class="t" style="left:884.19px;top:329.15px;font-size:12.3px;line-height:12.3px;color:#58003c;font-weight:700;transform:scaleX(0.9176);">normal</span>
<span class="t" style="left:948.45px;top:329.15px;font-size:12.3px;line-height:12.3px;color:#58003c;font-weight:700;transform:scaleX(1.0592);">x 2</span>
<span class="t" style="left:992.44px;top:329.15px;font-size:12.3px;line-height:12.3px;color:#58003c;font-weight:700;transform:scaleX(1.0776);">x 5</span>
<span class="t" style="left:1040.88px;top:329.15px;font-size:12.3px;line-height:12.3px;color:#800080;font-weight:700;transform:scaleX(0.9354);">Form opacity</span>
<span class="t" style="left:812.41px;top:383.30px;font-size:12px;line-height:12px;color:#000;transform:scaleX(0.8875);">RMS fit 0.0 ±0.0 km</span>
<span class="t mono" style="left:899.85px;top:407.90px;font-size:10.8px;line-height:10.8px;color:#1c1c28;transform:scaleX(1.2731);">1    W Hanna, near Yass, Nsw</span>
<span class="t mono" style="left:899.85px;top:419.90px;font-size:10.8px;line-height:10.8px;color:#1c1c28;transform:scaleX(1.2731);">2    D Herald, near Murrumba</span>
<span class="t mono" style="left:899.85px;top:431.90px;font-size:10.8px;line-height:10.8px;color:#1c1c28;transform:scaleX(1.2731);">3(P) Predicted</span>
<div style="left:1130px;top:404px;width:9px;height:40px;background:#f0f0f0;border-left:1px solid #e3e3e3;border-right:1px solid #2a6f8c"></div><div style="left:1131px;top:404px;width:1px;height:40px;background:#fff"></div>
</body></html>
